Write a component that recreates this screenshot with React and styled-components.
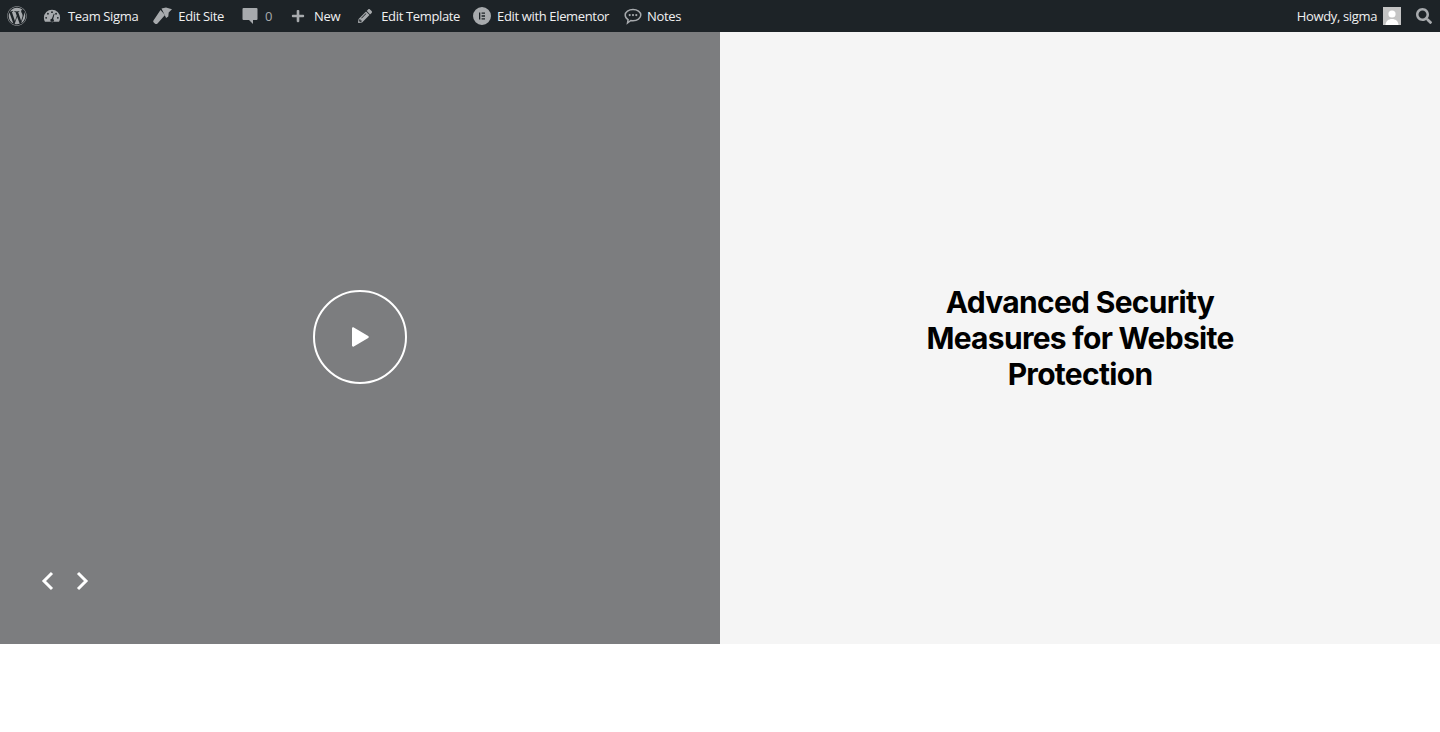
import React from 'react';
import styled, { createGlobalStyle } from 'styled-components';
import { FaWordpress, FaPencilAlt, FaSearch, FaPlus } from 'react-icons/fa';

const GlobalStyle = createGlobalStyle`
    * {
        box-sizing: border-box;
    }
    body {
        margin: 0;
        background: #fff;
        font-family: "Open Sans", "Liberation Sans", sans-serif;
    }
`;

const AdminBar = styled.div`
    height: 32px;
    background: #1d2327;
    display: flex;
    justify-content: space-between;
    align-items: center;
`;

const BarGroup = styled.div`
    display: flex;
    align-items: center;
    height: 100%;
`;

const BarItem = styled.div`
    display: flex;
    align-items: center;
    height: 100%;
    padding-left: ${props => props.$left || 0}px;
    padding-right: ${props => props.$right || 0}px;
    gap: ${props => props.$gap || 6}px;
    font-size: 13px;
    letter-spacing: -0.35px;
    white-space: nowrap;
    color: ${props => props.$muted ? '#a7aaad' : '#f0f0f1'};

    svg {
        display: block;
        flex-shrink: 0;
        color: #a7aaad;
        fill: currentColor;
    }
`;

const Avatar = styled.div`
    width: 18px;
    height: 18px;
    background: #c4c4c4;
    overflow: hidden;

    svg {
        color: #fff;
    }
`;

const Hero = styled.section`
    display: grid;
    grid-template-columns: 1fr 1fr;
    height: 612px;
`;

const VideoPanel = styled.div`
    position: relative;
    background: #7c7d7f;
    display: flex;
    align-items: center;
    justify-content: center;
    padding-bottom: 2px;
`;

const PlayButton = styled.button`
    width: 94px;
    height: 94px;
    border: 2px solid #fff;
    border-radius: 50%;
    background: transparent;
    display: flex;
    align-items: center;
    justify-content: center;
    padding: 0;
    cursor: pointer;
`;

const SliderNav = styled.div`
    position: absolute;
    left: 39px;
    bottom: 51px;
    display: flex;
    gap: 20px;
`;

const Arrow = styled.button`
    width: 16px;
    height: 24px;
    padding: 0;
    border: 0;
    background: transparent;
    cursor: pointer;
`;

const TextPanel = styled.div`
    background: #f5f5f5;
    display: flex;
    align-items: center;
    justify-content: center;
`;

const Title = styled.h2`
    margin: 0;
    width: 340px;
    font-family: Inter, "Liberation Sans", sans-serif;
    font-size: 30px;
    font-weight: 650;
    line-height: 36px;
    letter-spacing: -0.7px;
    text-align: center;
    color: #000;
`;

const Gauge = () => (
    <svg width="18" height="18" viewBox="0 0 20 20">
        <path d="M10 3a9 9 0 0 0-9 9c0 1.700.4 3.200 1.200 4.500h15.600A9 9 0 0 0 19 12a9 9 0 0 0-9-9zm0 1.800a1 1 0 1 1 0 2 1 1 0 0 1 0-2zM5.500 6.500a1 1 0 1 1 0 2 1 1 0 0 1 0-2zm9 0a1 1 0 1 1 0 2 1 1 0 0 1 0-2zM3.500 11a1 1 0 1 1 0 2 1 1 0 0 1 0-2zm13 0a1 1 0 1 1 0 2 1 1 0 0 1 0-2zM12 7.500l.8.4-1.500 5.400a1.900 1.900 0 1 1-1.500-.3z" fillRule="evenodd" />
    </svg>
);

const Brush = () => (
    <svg width="19" height="18" viewBox="0 0 19 18">
        <path d="M8.500 1.500L13 .5l6 1.800-3.300 3.200-.4 4-2.200 1.600z" />
        <path d="M7.500 3L12 8l-7.500 8.500c-.8.800-1.800.8-2.700 0l-1-1c-.8-.8-.8-1.800 0-2.600z" />
    </svg>
);

const Bubble = () => (
    <svg width="16" height="18" viewBox="0 0 16 18">
        <path d="M1.500 1h13a1 1 0 0 1 1 1v10a1 1 0 0 1-1 1H11v4l-4-4H1.500a1 1 0 0 1-1-1V2a1 1 0 0 1 1-1z" />
    </svg>
);

const Elementor = () => (
    <svg width="18" height="18" viewBox="0 0 18 18">
        <path fillRule="evenodd" d="M9 0a9 9 0 1 1 0 18A9 9 0 0 1 9 0zM6 5.500v7h1.300v-7zm2.600 0v1.300H12V5.500zm0 2.800v1.400H12V8.300zm0 2.900v1.300H12v-1.300z" />
    </svg>
);

const Notes = () => (
    <svg width="18" height="18" viewBox="0 0 18 18">
        <path fill="none" stroke="currentColor" strokeWidth="1.500" d="M9 2.500c4.300 0 7.800 2.500 7.800 5.600s-3.500 5.600-7.800 5.600c-.8 0-1.500-.1-2.200-.2L3.500 16l.6-3.400C2.300 11.600 1.200 10 1.200 8.100 1.200 5 4.700 2.500 9 2.500z" />
        <circle cx="5.700" cy="8.100" r="1.100" />
        <circle cx="9" cy="8.100" r="1.100" />
        <circle cx="12.300" cy="8.100" r="1.100" />
    </svg>
);

const Person = () => (
    <svg width="18" height="18" viewBox="0 0 18 18">
        <circle cx="9" cy="7" r="3.600" />
        <path d="M2.500 18c.3-4 3-6 6.500-6s6.200 2 6.500 6z" />
    </svg>
);

function App() {
    return (
        <>
            <GlobalStyle />
            <AdminBar>
                <BarGroup>
                    <BarItem $left={7} $right={16}><FaWordpress size={20} /></BarItem>
                    <BarItem $right={15} $gap={7}><Gauge />Team Sigma</BarItem>
                    <BarItem $right={18} $gap={6}><Brush />Edit Site</BarItem>
                    <BarItem $right={19} $muted $gap={7}><Bubble />0</BarItem>
                    <BarItem $right={18} $gap={9}><FaPlus size={14} />New</BarItem>
                    <BarItem $right={13} $gap={9}><FaPencilAlt size={14} />Edit Template</BarItem>
                    <BarItem $right={15} $gap={6}><Elementor />Edit with Elementor</BarItem>
                    <BarItem $gap={5}><Notes />Notes</BarItem>
                </BarGroup>
                <BarGroup>
                    <BarItem $right={15}>Howdy, sigma<Avatar><Person /></Avatar></BarItem>
                    <BarItem $right={8}><FaSearch size={16} /></BarItem>
                </BarGroup>
            </AdminBar>
            <Hero>
                <VideoPanel>
                    <PlayButton aria-label="Play">
                        <svg width="20" height="22" viewBox="0 0 20 22">
                            <path d="M2 2.500v17c0 1 1 1.500 1.800 1L18.200 12c.8-.5.8-1.500 0-2L3.800 1.500C3 1 2 1.500 2 2.500z" fill="#fff" />
                        </svg>
                    </PlayButton>
                    <SliderNav>
                        <Arrow aria-label="Previous">
                            <svg width="16" height="24" viewBox="0 0 16 24"><path d="M13 4l-8 8 8 8" fill="none" stroke="#fff" strokeWidth="3" /></svg>
                        </Arrow>
                        <Arrow aria-label="Next">
                            <svg width="16" height="24" viewBox="0 0 16 24"><path d="M3 4l8 8-8 8" fill="none" stroke="#fff" strokeWidth="3" /></svg>
                        </Arrow>
                    </SliderNav>
                </VideoPanel>
                <TextPanel>
                    <Title>Advanced Security Measures for Website Protection</Title>
                </TextPanel>
            </Hero>
        </>
    );
}

export default App;
